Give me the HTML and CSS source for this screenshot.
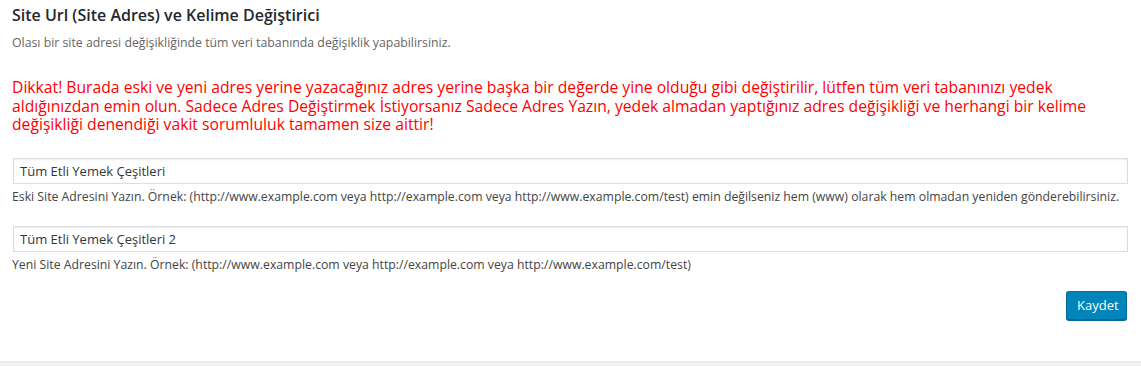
FILE: index.html
```html
<!DOCTYPE html>
<html lang="tr">
<head>
<meta charset="utf-8">
<title>Site Url ve Kelime Değiştirici</title>
<link rel="stylesheet" href="styles.css">
</head>
<body>
<div class="panel">
  <h2 class="title">Site Url (Site Adres) ve Kelime Değiştirici</h2>
  <p class="sub">Olası bir site adresi değişikliğinde tüm veri tabanında değişiklik yapabilirsiniz.</p>
  <p class="warn">Dikkat! Burada eski ve yeni adres yerine yazacağınız adres yerine başka bir değerde yine olduğu gibi değiştirilir, lütfen tüm veri tabanınızı yedek aldığınızdan emin olun. Sadece Adres Değiştirmek İstiyorsanız Sadece Adres Yazın, yedek almadan yaptığınız adres değişikliği ve herhangi bir kelime değişikliği denendiği vakit sorumluluk tamamen size aittir!</p>
  <form class="form">
    <div class="field">
      <input class="text" type="text" value="Tüm Etli Yemek Çeşitleri">
      <p class="desc">Eski Site Adresini Yazın. Örnek: (http://www.example.com veya http://example.com veya http://www.example.com/test) emin değilseniz hem (www) olarak hem olmadan yeniden gönderebilirsiniz.</p>
    </div>
    <div class="field">
      <input class="text" type="text" value="Tüm Etli Yemek Çeşitleri 2">
      <p class="desc">Yeni Site Adresini Yazın. Örnek: (http://www.example.com veya http://example.com veya http://www.example.com/test)</p>
    </div>
    <div class="actions">
      <button class="btn" type="button">Kaydet</button>
    </div>
  </form>
</div>
</body>
</html>
```
FILE: styles.css
```css
html, body {
  margin: 0;
  padding: 0;
}
body {
  background: #f1f1f1;
  font-family: "Open Sans", "Noto Sans", "Liberation Sans", sans-serif;
  color: #444;
}
.panel {
  background: #fff;
  height: 362px;
  box-sizing: border-box;
  padding: 0 12px;
  border-bottom: 1px solid #e8e8e8;
}
.title {
  margin: 0;
  padding-top: 5px;
  font-size: 16px;
  line-height: 20px;
  font-weight: 600;
  color: #23282d;
}
.sub {
  margin: 9px 0 0;
  font-size: 12.3px;
  line-height: 18px;
  color: #666;
}
.warn {
  margin: 26px 0 0;
  font-size: 15.7px;
  line-height: 18.5px;
  color: #ff0000;
}
.form {
  display: flex;
  flex-direction: column;
  gap: 19px;
  margin-top: 23.5px;
}
.field {
  display: flex;
  flex-direction: column;
}
.text {
  display: block;
  box-sizing: border-box;
  height: 26px;
  margin: 1px;
  padding: 0 6px;
  border: 1px solid #ddd;
  box-shadow: inset 0 1px 2px rgba(0,0,0,.07);
  background: #fff;
  font-family: inherit;
  font-size: 13px;
  color: #32373c;
  outline: none;
}
.desc {
  margin: 3px 0 0;
  font-size: 12.25px;
  line-height: 18px;
  color: #444;
}
.actions {
  display: flex;
  justify-content: flex-end;
  margin-top: -2px;
  padding-right: 2px;
}
.btn {
  box-sizing: border-box;
  width: 61px;
  height: 29px;
  padding: 0 10px 1px;
  border: 1px solid #0073aa;
  border-color: #0073aa #006799 #006799;
  border-radius: 3px;
  background: #0085ba;
  box-shadow: 0 1px 0 #006799;
  color: #fff;
  font-family: inherit;
  font-size: 13px;
  line-height: 26px;
  cursor: pointer;
}
```
